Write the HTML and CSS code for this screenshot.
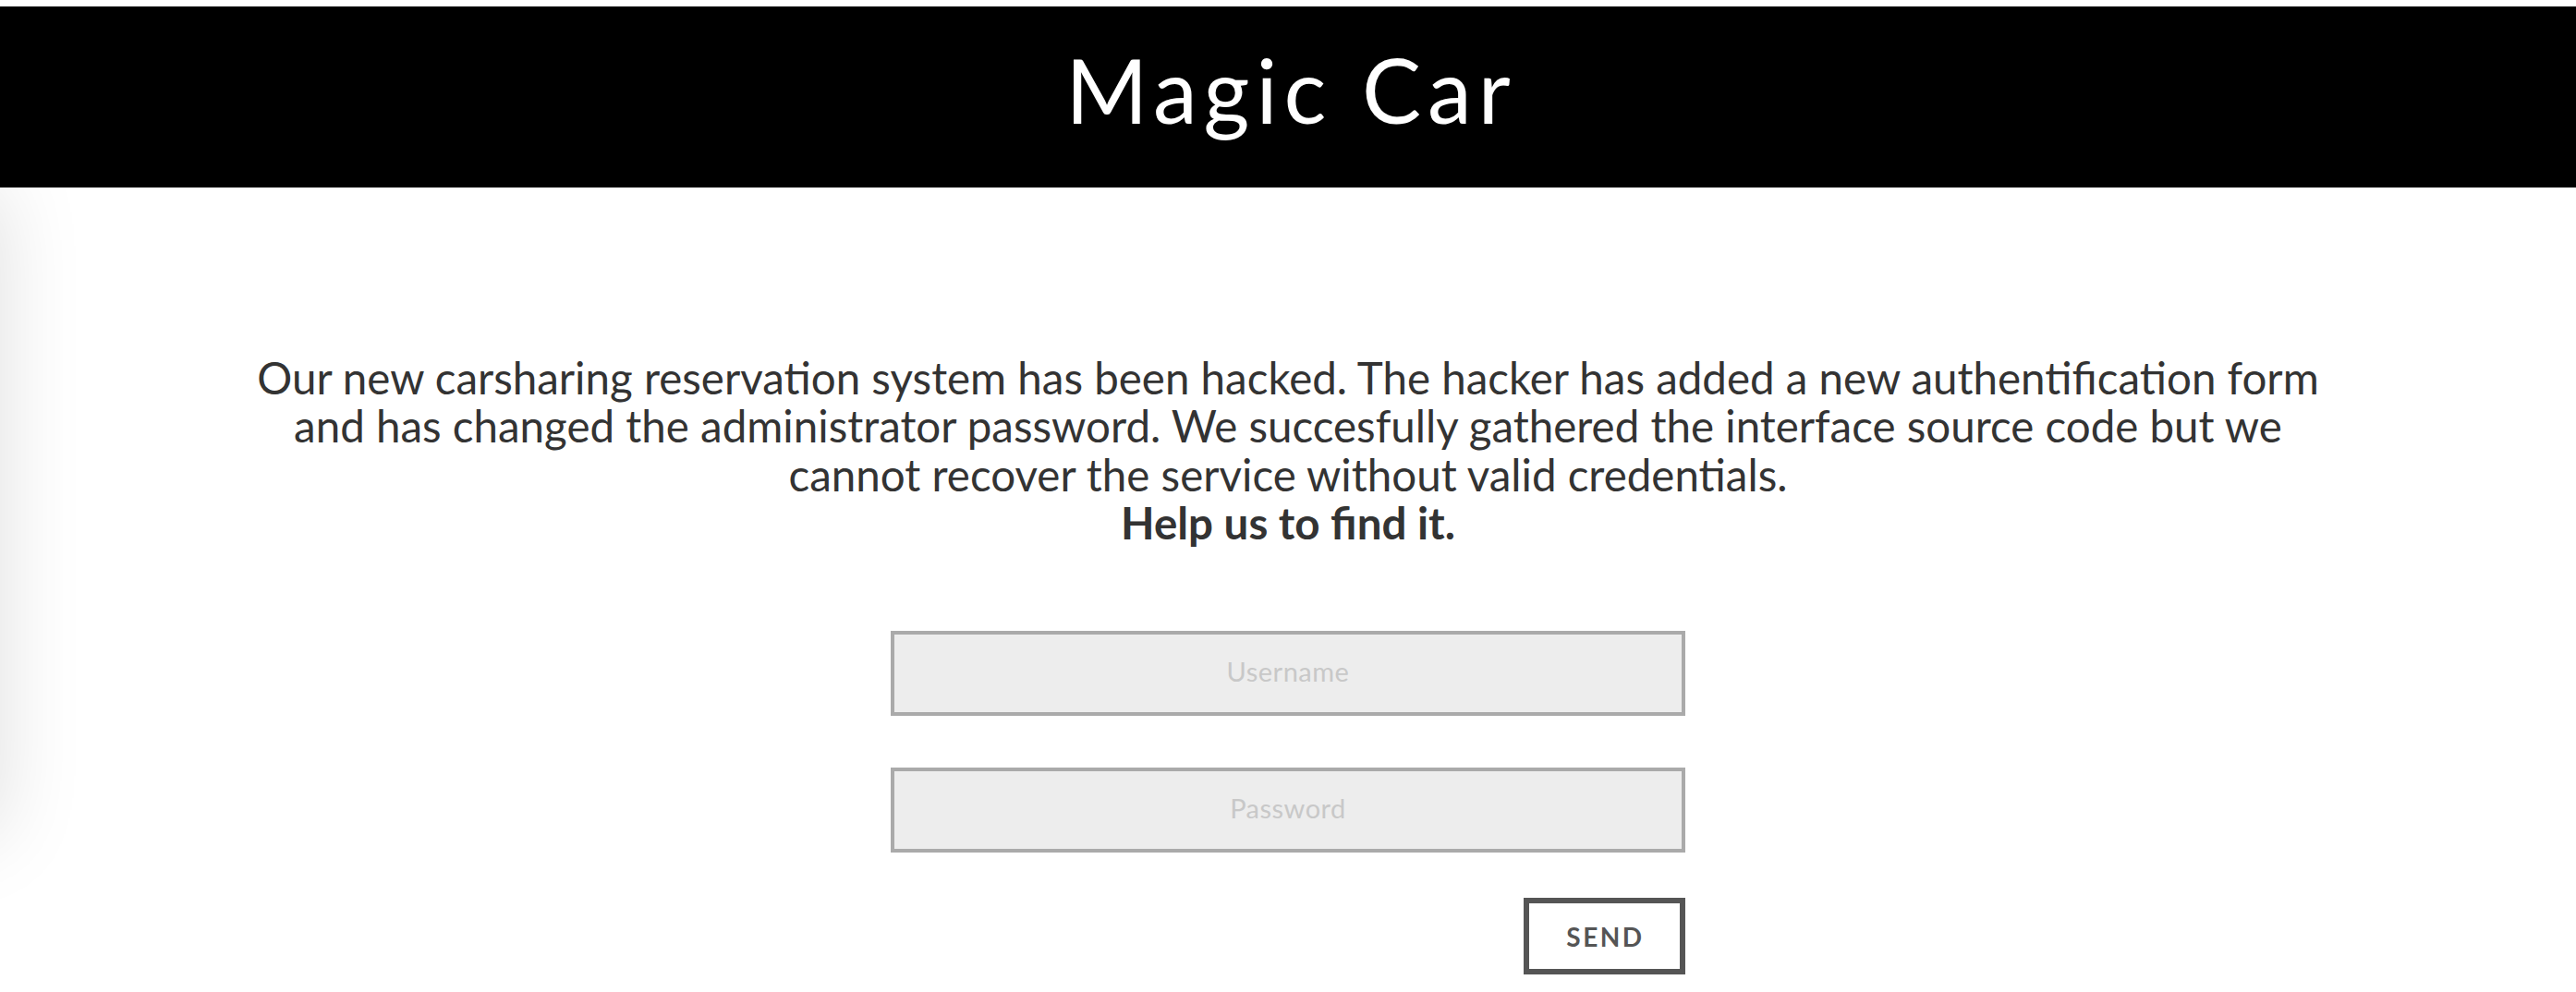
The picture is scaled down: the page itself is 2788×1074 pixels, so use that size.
FILE: index.html
```html
<!DOCTYPE html>
<html lang="en">
<head>
<meta charset="utf-8">
<title>Magic Car</title>
<link rel="stylesheet" href="styles.css">
</head>
<body>
<div class="side-shadow"></div>
<header class="topbar">
  <h1 class="brand">Magic Car</h1>
</header>
<main class="content">
  <p class="intro">Our new carsharing reservation system has been hacked. The hacker has added a new authentification form<br>and has changed the administrator password. We succesfully gathered the interface source code but we<br>cannot recover the service without valid credentials.<br><strong>Help us to find it.</strong></p>
  <form class="login" onsubmit="return false">
    <input class="field" type="text" placeholder="Username">
    <input class="field" type="password" placeholder="Password">
    <div class="actions"><button class="send" type="submit">SEND</button></div>
  </form>
</main>
</body>
</html>
```
FILE: styles.css
```css
html, body {
  margin: 0;
  padding: 0;
  background: #fff;
  overflow: hidden;
}
body {
  font-family: "Lato", "Liberation Sans", sans-serif;
  color: #333;
  height: 1074px;
  position: relative;
}
.side-shadow {
  position: absolute;
  left: -120px;
  top: 203px;
  width: 120px;
  height: 700px;
  box-shadow: 0 0 90px rgba(0, 0, 0, 0.13);
}
.topbar {
  margin-top: 7px;
  height: 196px;
  background: #000;
  display: flex;
  justify-content: center;
}
.brand {
  margin: 0;
  padding-top: 30px;
  padding-left: 7px;
  font-family: "Lato", sans-serif;
  font-weight: 400;
  font-size: 96px;
  line-height: 120px;
  color: #fff;
  letter-spacing: 7px;
}
.content {
  display: flex;
  flex-direction: column;
  align-items: center;
  padding-top: 180px;
}
.intro {
  margin: 0;
  font-size: 47.5px;
  line-height: 52.3px;
  text-align: center;
  white-space: nowrap;
  color: #333;
}
.intro strong {
  font-weight: 700;
}
.login {
  margin-top: 91px;
  width: 860px;
  display: flex;
  flex-direction: column;
  gap: 56px;
}
.field {
  box-sizing: border-box;
  width: 860px;
  height: 92px;
  border: 4px solid #aaa;
  background: #ededed;
  font-family: "Lato", sans-serif;
  font-size: 29px;
  letter-spacing: 0.5px;
  text-align: center;
  color: #333;
  outline: none;
  padding: 0 0 5px 0;
}
.field::placeholder {
  color: #c8c8c8;
}
.actions {
  display: flex;
  justify-content: flex-end;
  margin-top: -7px;
}
.send {
  box-sizing: border-box;
  width: 175px;
  height: 83px;
  border: 6px solid #555;
  background: #fff;
  color: #555;
  font-family: "Lato", sans-serif;
  font-weight: 700;
  font-size: 28px;
  letter-spacing: 2.5px;
  padding: 0 0 0 2px;
  cursor: pointer;
}
```
